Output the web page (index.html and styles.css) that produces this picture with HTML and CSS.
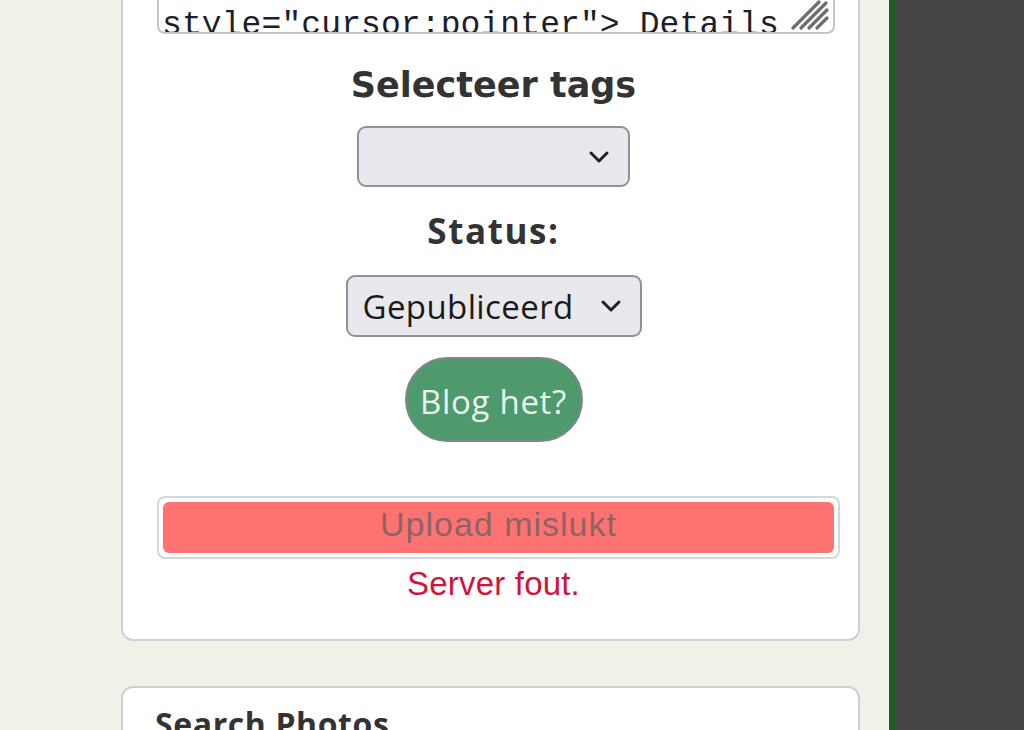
FILE: index.html
```html
<!DOCTYPE html>
<html lang="nl">
<head>
<meta charset="utf-8">
<title>Blog</title>
<link rel="stylesheet" href="styles.css">
</head>
<body>
<div class="layout">
  <main class="content">
    <section class="card card-form">
      <div class="textarea">
        <div class="ta-line">&lt;button class="btn btn-info"</div>
        <div class="ta-line">style="cursor:pointer"&gt; Details</div>
        <svg class="resize" width="44" height="32" viewBox="0 0 44 32">
          <g stroke="#6e6e6e" stroke-width="3.2" stroke-linecap="round">
            <line x1="5" y1="28" x2="31" y2="2"/>
            <line x1="13" y1="28" x2="38" y2="3"/>
            <line x1="21" y1="28" x2="39" y2="10"/>
            <line x1="29" y1="28" x2="39" y2="18"/>
          </g>
        </svg>
      </div>
      <h3 class="label label-tags">Selecteer tags</h3>
      <div class="select select-tags">
        <span class="select-text"></span>
        <svg class="chev" width="22" height="14" viewBox="0 0 22 14"><path d="M3 3 L11 11 L19 3" fill="none" stroke="#222" stroke-width="3" stroke-linecap="round" stroke-linejoin="round"/></svg>
      </div>
      <h3 class="label label-status">Status:</h3>
      <div class="select select-status">
        <span class="select-text">Gepubliceerd</span>
        <svg class="chev" width="22" height="14" viewBox="0 0 22 14"><path d="M3 3 L11 11 L19 3" fill="none" stroke="#222" stroke-width="3" stroke-linecap="round" stroke-linejoin="round"/></svg>
      </div>
      <button class="blog-btn" type="button">Blog het?</button>
      <div class="upload">
        <div class="upload-bar">Upload mislukt</div>
      </div>
      <p class="error">Server fout.</p>
    </section>
    <section class="card card-search">
      <h3 class="search-title">Search Photos</h3>
    </section>
  </main>
  <aside class="sidebar"></aside>
</div>
</body>
</html>
```

FILE: styles.css
```css
html, body {
  margin: 0;
  padding: 0;
  height: 100%;
  overflow: hidden;
}
body {
  background: #eef2e9;
  font-family: "Liberation Sans", Arial, sans-serif;
}
.layout {
  display: flex;
  height: 730px;
}
.content {
  width: 739px;
  margin-left: 121px;
  flex: none;
}
.sidebar {
  margin-left: 29px;
  flex: 1;
  border-left: 6px solid #1f5b22;
  background: #454545;
}
.card {
  background: #fff;
  border: 2px solid #d0d0d0;
  border-radius: 12px;
  box-sizing: border-box;
}
.card-form {
  margin-top: -80px;
  padding: 20px 18px 0 34px;
  height: 721px;
  display: flex;
  flex-direction: column;
  align-items: center;
}
.textarea {
  position: relative;
  align-self: stretch;
  margin-right: 5px;
  height: 92px;
  box-sizing: border-box;
  border: 2px solid #c4c4c4;
  border-radius: 8px;
  padding: 22px 3px 0;
  overflow: hidden;
  font-family: "Liberation Mono", "DejaVu Sans Mono", monospace;
  font-size: 33px;
  letter-spacing: 0.1px;
  line-height: 40px;
  color: #1e1e2a;
  white-space: nowrap;
}
.resize {
  position: absolute;
  right: 1px;
  bottom: 0;
}
.label {
  margin: 0;
  font-weight: bold;
  color: #333;
}
.label-tags {
  font-family: "DejaVu Sans", sans-serif;
  font-size: 35px;
  line-height: 40px;
  margin-top: 31px;
  margin-right: 10px;
}
.label-status {
  font-family: "Open Sans", sans-serif;
  font-size: 35px;
  letter-spacing: 1.6px;
  line-height: 40px;
  margin-top: 24px;
  margin-right: 10px;
}
.select {
  display: flex;
  align-items: center;
  justify-content: space-between;
  box-sizing: border-box;
  background: #e9e9ed;
  border: 2px solid #8f8f9d;
  border-radius: 9px;
  color: #1a1a1a;
  font-family: "Open Sans", sans-serif;
}
.select-tags {
  width: 273px;
  height: 61px;
  margin-top: 21px;
  margin-right: 10px;
  padding: 0 18px 0 14px;
}
.select-status {
  width: 296px;
  height: 62px;
  margin-top: 24px;
  margin-right: 10px;
  padding: 0 18px 0 15px;
  font-size: 33px;
}
.select-text {
  letter-spacing: 0.4px;
}
.blog-btn {
  margin-top: 20px;
  margin-right: 10px;
  width: 178px;
  height: 85px;
  border-radius: 43px;
  border: 2px solid #7c8a80;
  background: #4e9a6d;
  color: #eaf7ef;
  font-family: "Open Sans", sans-serif;
  font-size: 33px;
  letter-spacing: 0.7px;
  padding: 4px 0 0;
}
.upload {
  align-self: stretch;
  margin-top: 54px;
  border: 2px solid #d6d6d6;
  border-radius: 8px;
  padding: 4px;
  box-sizing: border-box;
  height: 63px;
}
.upload-bar {
  height: 100%;
  background: #ff7272;
  border-radius: 6px;
  text-align: center;
  font-size: 34px;
  line-height: 45px;
  color: #8c6466;
  letter-spacing: 1px;
}
.error {
  margin: 5px 10px 0 0;
  font-size: 33px;
  letter-spacing: 0.2px;
  line-height: 40px;
  color: #d0143a;
}
.card-search {
  margin-top: 45px;
  height: 100px;
  padding: 16px 32px;
}
.search-title {
  margin: 0;
  font-family: "Open Sans", sans-serif;
  font-weight: bold;
  font-size: 32px;
  letter-spacing: 0.6px;
  line-height: 40px;
  color: #333;
}
```
